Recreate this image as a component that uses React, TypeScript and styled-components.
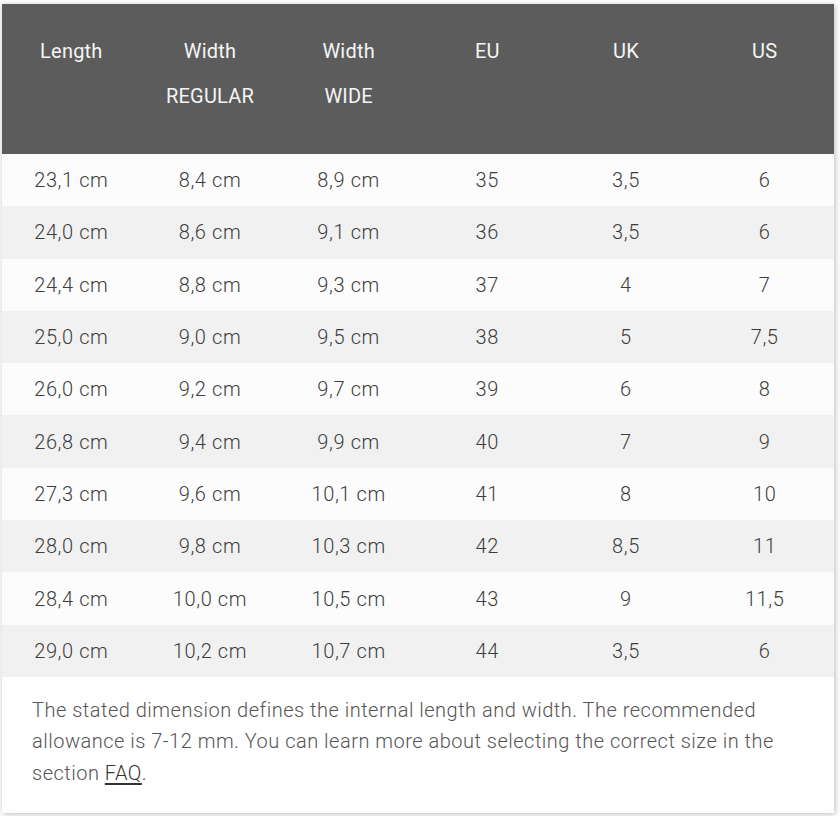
import styled, { createGlobalStyle } from "styled-components";

const GlobalStyle = createGlobalStyle`
	html, body {
		margin: 0;
		padding: 0;
		background: #ffffff;
	}
	body {
		font-family: "Roboto", "Liberation Sans", sans-serif;
	}
`;

const Page = styled.div`
	padding: 4px 6px 3px 2px;
`;

const Card = styled.div`
	width: 832px;
	background: #ffffff;
	box-shadow: 1px 1px 6px rgba(0, 0, 0, 0.28);
`;

const Table = styled.table`
	width: 100%;
	border-collapse: collapse;
	table-layout: fixed;
`;

const HeadRow = styled.tr`
	background: #5c5c5c;
	height: 150px;
`;

const HeadCell = styled.th`
	vertical-align: top;
	padding-top: 25px;
	font-weight: 400;
	font-size: 20px;
	line-height: 45px;
	color: #f4f4f4;
	text-align: center;
	letter-spacing: 0.2px;
`;

const Row = styled.tr<{ $shaded: boolean }>`
	background: ${(p) => (p.$shaded ? "#f1f1f1" : "#fcfcfc")};
	height: 52.3px;
`;

const Cell = styled.td`
	text-align: center;
	font-size: 20px;
	font-weight: 300;
	color: #3d3d3d;
	letter-spacing: 0.6px;
`;

const Note = styled.p`
	margin: 0;
	padding: 18px 30px 24px 30px;
	font-size: 20px;
	font-weight: 300;
	line-height: 31.5px;
	color: #555555;
	letter-spacing: 0.5px;
`;

const FaqLink = styled.a`
	color: #333333;
	text-decoration: underline;
	text-underline-offset: 3px;
`;

const headers = [
	["Length"],
	["Width", "REGULAR"],
	["Width", "WIDE"],
	["EU"],
	["UK"],
	["US"],
];

const sizes = [
	["23,1 cm", "8,4 cm", "8,9 cm", "35", "3,5", "6"],
	["24,0 cm", "8,6 cm", "9,1 cm", "36", "3,5", "6"],
	["24,4 cm", "8,8 cm", "9,3 cm", "37", "4", "7"],
	["25,0 cm", "9,0 cm", "9,5 cm", "38", "5", "7,5"],
	["26,0 cm", "9,2 cm", "9,7 cm", "39", "6", "8"],
	["26,8 cm", "9,4 cm", "9,9 cm", "40", "7", "9"],
	["27,3 cm", "9,6 cm", "10,1 cm", "41", "8", "10"],
	["28,0 cm", "9,8 cm", "10,3 cm", "42", "8,5", "11"],
	["28,4 cm", "10,0 cm", "10,5 cm", "43", "9", "11,5"],
	["29,0 cm", "10,2 cm", "10,7 cm", "44", "3,5", "6"],
];

const App = () => {
	return (
		<Page>
			<GlobalStyle />
			<Card>
				<Table>
					<thead>
						<HeadRow>
							{headers.map((h, i) => (
								<HeadCell key={i}>
									{h.map((line, j) => (
										<div key={j}>{line}</div>
									))}
								</HeadCell>
							))}
						</HeadRow>
					</thead>
					<tbody>
						{sizes.map((row, i) => (
							<Row key={i} $shaded={i % 2 === 1}>
								{row.map((val, j) => (
									<Cell key={j}>{val}</Cell>
								))}
							</Row>
						))}
					</tbody>
				</Table>
				<Note>
					The stated dimension defines the internal length and width. The recommended
					allowance is 7-12 mm. You can learn more about selecting the correct size in the
					section <FaqLink href="#">FAQ</FaqLink>.
				</Note>
			</Card>
		</Page>
	);
};

export default App;
